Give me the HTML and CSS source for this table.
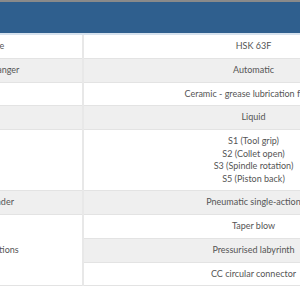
FILE: index.html
```html
<!DOCTYPE html>
<html>
<head>
<meta charset="utf-8">
<link rel="stylesheet" href="styles.css">
</head>
<body>
<div class="frame">
  <table class="specs">
    <colgroup>
      <col class="col-label">
      <col class="col-value">
    </colgroup>
    <thead>
      <tr><th class="head" colspan="2"></th></tr>
    </thead>
    <tbody>
      <tr><td class="label">Interface</td><td class="value">HSK 63F</td></tr>
      <tr class="alt"><td class="label">Tool changer</td><td class="value">Automatic</td></tr>
      <tr><td class="label">Rotor</td><td class="value">Ceramic - grease lubrication for life</td></tr>
      <tr class="alt"><td class="label">Cooler</td><td class="value">Liquid</td></tr>
      <tr><td class="label">Sensors</td><td class="value">S1 (Tool grip)<br>S2 (Collet open)<br>S3 (Spindle rotation)<br>S5 (Piston back)</td></tr>
      <tr class="alt"><td class="label">Air cylinder</td><td class="value">Pneumatic single-action</td></tr>
      <tr><td class="label" rowspan="3">Connections</td><td class="value">Taper blow</td></tr>
      <tr class="alt"><td class="value">Pressurised labyrinth</td></tr>
      <tr><td class="value">CC circular connector</td></tr>
    </tbody>
  </table>
</div>
</body>
</html>
```

FILE: styles.css
```css
html, body {
  margin: 0;
  padding: 0;
  background: #ffffff;
  overflow: hidden;
}

.frame {
  width: 300px;
  height: 300px;
  overflow: hidden;
}

.specs {
  border-collapse: collapse;
  margin-left: -41px;
  width: 464px;
  table-layout: fixed;
  font-family: Lato, "Liberation Sans", sans-serif;
  font-size: 9px;
  line-height: 12.5px;
  color: #555555;
}

.col-label {
  width: 124px;
}

.col-value {
  width: 340px;
}

.head {
  height: 31px;
  padding: 0;
  background: #2f5f8e;
  border-top: 2px solid #8a8a8a;
  border-bottom: 2px solid #d6e2ee;
}

.specs td {
  padding: 5px 10px 5.25px;
  border-bottom: 1px solid #e3e3e3;
  vertical-align: middle;
}

.label {
  text-align: left;
  border-right: 2px solid #e8e8e8;
  background: #ffffff;
}

.value {
  text-align: center;
}

.alt td.value,
.alt td.label {
  background: #efefef;
}
```
